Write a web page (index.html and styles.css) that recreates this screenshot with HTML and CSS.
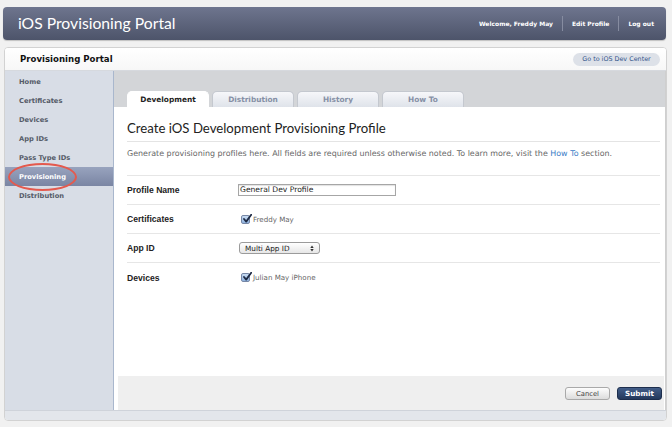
FILE: index.html
```html
<!DOCTYPE html>
<html>
<head>
<meta charset="utf-8">
<link rel="stylesheet" href="styles.css">
</head>
<body>
<header class="topbar">
  <div class="site-title">iOS Provisioning Portal</div>
  <nav class="user-links">
    <span class="welcome">Welcome, Freddy May</span>
    <span class="sep"></span>
    <span class="ulink">Edit Profile</span>
    <span class="sep"></span>
    <span class="ulink">Log out</span>
  </nav>
</header>
<div class="panel">
  <div class="panel-head">
    <div class="panel-title">Provisioning Portal</div>
    <div class="dev-center">Go to iOS Dev Center</div>
  </div>
  <div class="panel-body">
    <aside class="sidebar">
      <div class="nav-item">Home</div>
      <div class="nav-item">Certificates</div>
      <div class="nav-item">Devices</div>
      <div class="nav-item">App IDs</div>
      <div class="nav-item">Pass Type IDs</div>
      <div class="nav-item selected">Provisioning<span class="circle"></span></div>
      <div class="nav-item">Distribution</div>
    </aside>
    <section class="content">
      <div class="tabbar">
        <div class="tab active">Development</div>
        <div class="tab">Distribution</div>
        <div class="tab">History</div>
        <div class="tab">How To</div>
      </div>
      <div class="main">
        <h1 class="heading">Create iOS Development Provisioning Profile</h1>
        <p class="desc">Generate provisioning profiles here. All fields are required unless otherwise noted. To learn more, visit the <span class="link">How To</span> section.</p>
        <div class="form">
          <div class="row">
            <div class="label">Profile Name</div>
            <div class="field"><div class="input">General Dev Profile</div></div>
          </div>
          <div class="row">
            <div class="label">Certificates</div>
            <div class="field"><span class="check"><svg viewBox="0 0 10 10" width="10" height="10"><path d="M2 5 L4.2 7.6 L9.2 0.8" fill="none" stroke="#1d2a44" stroke-width="1.8" stroke-linecap="round" stroke-linejoin="round"/></svg></span><span class="opt">Freddy May</span></div>
          </div>
          <div class="row">
            <div class="label">App ID</div>
            <div class="field"><div class="select"><span>Multi App ID</span><svg class="arrows" viewBox="0 0 4 7" width="4" height="7"><path d="M0.3 3 L2 0.6 L3.7 3 Z M0.3 4 L2 6.4 L3.7 4 Z" fill="#333"/></svg></div></div>
          </div>
          <div class="row">
            <div class="label">Devices</div>
            <div class="field"><span class="check"><svg viewBox="0 0 10 10" width="10" height="10"><path d="M2 5 L4.2 7.6 L9.2 0.8" fill="none" stroke="#1d2a44" stroke-width="1.8" stroke-linecap="round" stroke-linejoin="round"/></svg></span><span class="opt">Julian May iPhone</span></div>
          </div>
        </div>
      </div>
      <div class="footer">
        <div class="btn cancel">Cancel</div>
        <div class="btn submit">Submit</div>
      </div>
    </section>
  </div>
  <div class="panel-foot"></div>
</div>
</body>
</html>
```
FILE: styles.css
```css
* { box-sizing: border-box; }
body {
  margin: 0;
  padding: 7px 6px 0 3px;
  background: #f1f1f1;
  font-family: "DejaVu Sans", "Liberation Sans", sans-serif;
}
.topbar {
  height: 33px;
  border-radius: 4px;
  background: linear-gradient(#6e758e, #4d546a);
  display: flex;
  align-items: center;
  justify-content: space-between;
  padding: 0 12px 0 15px;
  box-shadow: 0 1px 1px rgba(0,0,0,0.2);
}
.site-title {
  font-family: Lato, "Open Sans", sans-serif;
  font-size: 15.7px;
  color: #fff;
  padding-bottom: 1px;
}
.user-links {
  display: flex;
  align-items: center;
  color: #fff;
  font-size: 6px;
  font-weight: bold;
}
.sep {
  width: 1px;
  height: 15px;
  background: #868ca0;
  margin: 0 9px;
}
.panel {
  margin: 7px -1px 0 1px;
  border: 1px solid #d2d2d2;
  border-radius: 4px;
  background: #fff;
  overflow: hidden;
}
.panel-head {
  height: 23px;
  border-bottom: 1px solid #d6d9de;
  display: flex;
  align-items: center;
  justify-content: space-between;
  padding: 0 6px 0 15px;
  background: linear-gradient(#ffffff, #f7f7f7);
}
.panel-title {
  font-size: 8.6px;
  font-weight: bold;
  color: #111;
}
.dev-center {
  width: 87px;
  height: 13px;
  border-radius: 7px;
  background: #dde1e8;
  color: #30528a;
  font-size: 6.4px;
  display: flex;
  align-items: center;
  justify-content: center;
}
.panel-body {
  display: flex;
  height: 339px;
}
.sidebar {
  width: 109px;
  background: #d8dde6;
  border-right: 1px solid #a9b7cd;
  padding-top: 1px;
}
.nav-item {
  position: relative;
  height: 19px;
  line-height: 19px;
  padding: 1px 0 0 14px;
  font-size: 6.7px;
  font-weight: bold;
  color: #555b68;
}
.nav-item.selected {
  background: linear-gradient(#98a3be, #7a85a3);
  color: #fff;
}
.circle {
  position: absolute;
  left: 3px;
  top: -4px;
  width: 69px;
  height: 28px;
  border: 2px solid #e45a4e;
  border-radius: 50%;
}
.content {
  flex: 1;
  display: flex;
  flex-direction: column;
  border-right: 1px solid #cfcfcf;
}
.tabbar {
  height: 36px;
  background: #d3d5d8;
  display: flex;
  align-items: flex-end;
  gap: 3px;
  padding-left: 13px;
}
.tab {
  width: 82px;
  height: 16px;
  border-radius: 5px 5px 0 0;
  background: linear-gradient(#f6f7fa, #dfe3ea);
  border: 1px solid #c4c8cf;
  border-bottom: none;
  color: #8690a6;
  font-size: 7.4px;
  font-weight: bold;
  display: flex;
  align-items: center;
  justify-content: center;
}
.tab.active {
  background: #fff;
  border-color: #fff;
  color: #222;
}
.main {
  flex: 1;
  padding: 13px 5px 0 13px;
}
.heading {
  margin: 0;
  font-family: Lato, "Open Sans", sans-serif;
  font-weight: normal;
  font-size: 13.2px;
  line-height: 16px;
  color: #222;
  padding-bottom: 5px;
  border-bottom: 1px solid #e4e4e4;
}
.desc {
  margin: 0;
  padding: 6px 0 15px;
  font-size: 7.95px;
  line-height: 12px;
  color: #666;
  border-bottom: 1px solid #e6e6e6;
  white-space: nowrap;
}
.link { color: #3a7cc6; }
.row {
  display: flex;
  align-items: center;
  height: 29px;
  border-bottom: 1px solid #e6e6e6;
}
.row:last-child { border-bottom: none; }
.label {
  width: 111px;
  font-family: "Liberation Sans", Arial, sans-serif;
  font-size: 8.6px;
  font-weight: bold;
  color: #222;
}
.field {
  display: flex;
  align-items: center;
}
.input {
  width: 158px;
  height: 12px;
  border: 1px solid #a6a6a6;
  box-shadow: inset 0 1px 1px rgba(0,0,0,0.12);
  font-size: 7.6px;
  line-height: 10px;
  padding-left: 1px;
  color: #222;
  background: #fff;
}
.check {
  width: 9px;
  height: 9px;
  margin-left: 3px;
  border: 1px solid #7687a6;
  border-radius: 2px;
  background: linear-gradient(#c9dcf2, #8fb2de);
  position: relative;
}
.check svg {
  position: absolute;
  left: 0;
  top: -2px;
}
.opt {
  margin-left: 3px;
  font-size: 7.1px;
  color: #666;
}
.select {
  width: 81px;
  height: 12px;
  margin-left: 1px;
  border: 1px solid #9b9b9b;
  border-radius: 3px;
  background: linear-gradient(#ffffff, #e6e6e6);
  display: flex;
  align-items: center;
  justify-content: space-between;
  padding: 0 5px 0 5px;
  font-size: 7.3px;
  color: #222;
}
.footer {
  height: 34px;
  margin: 0 1px 0 4px;
  background: #efefef;
  display: flex;
  justify-content: flex-end;
  align-items: center;
  gap: 7px;
  padding: 1px 2px 0 0;
}
.btn {
  width: 45px;
  height: 13px;
  border-radius: 3px;
  display: flex;
  align-items: center;
  justify-content: center;
}
.cancel {
  background: linear-gradient(#fdfdfd, #dcdcdc);
  border: 1px solid #a9a9a9;
  color: #444;
  font-size: 6.8px;
}
.submit {
  background: linear-gradient(#425d88, #24395c);
  border: 1px solid #1d2e4d;
  color: #fff;
  font-weight: bold;
  font-size: 7.2px;
}
.panel-foot {
  height: 10px;
  background: #e3e6eb;
  border-top: 1px solid #cfd3da;
}
```
